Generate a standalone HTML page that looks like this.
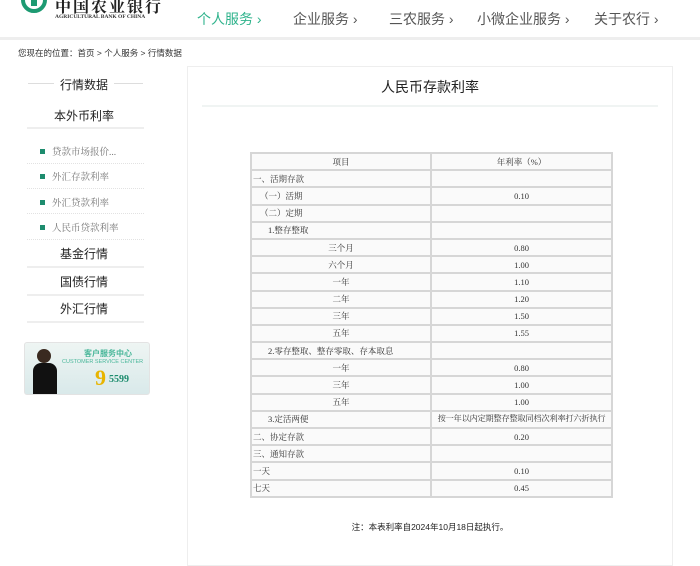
<!DOCTYPE html>
<html><head><meta charset="utf-8"><style>
*{margin:0;padding:0;box-sizing:border-box}
body{width:700px;height:552px;overflow:hidden;background:#fff;font-family:"Liberation Sans","Noto Sans CJK SC",sans-serif;position:relative;color:#333}
.a{position:absolute;white-space:nowrap}
.nav{font-size:14px;color:#555;top:9px}
.side{width:118px;left:25px;text-align:center;font-size:12px;color:#222}
.sub{left:40px;font-size:9.5px;color:#777;font-family:"Liberation Serif","Noto Serif CJK SC",serif}
.sub:before{content:"";display:inline-block;width:5px;height:5px;background:#1d8c6e;margin-right:7px;vertical-align:1px}
.dl{position:absolute;left:27px;width:117px;border-top:1px dotted #e2e2e2}
.sl{position:absolute;left:27px;width:117px;height:2px;background:#eee}
table{position:absolute;left:250px;top:152px;width:361px;border-collapse:collapse;table-layout:fixed;font-family:"Liberation Serif","Noto Serif CJK SC",serif;font-size:8.5px;color:#333}
td{border:2px solid #d6d6d6;height:17.2px;padding:0 1px;background:#fafafa;line-height:12px;white-space:nowrap;overflow:hidden}
td.c{text-align:center}
</style></head><body>
<div class="a" style="left:0;top:37px;width:700px;height:3px;background:#eee"></div>
<svg class="a" style="left:20px;top:-8px" width="28" height="22"><circle cx="14" cy="8" r="11" fill="none" stroke="#1d9a72" stroke-width="4"/><rect x="11" y="-2" width="6" height="16" fill="#1d9a72"/></svg>
<div class="a" style="left:55px;top:-6px;font-size:16px;font-weight:bold;color:#222;font-family:'Liberation Serif','Noto Serif CJK SC',serif;letter-spacing:2px">中国农业银行</div>
<div class="a" style="left:55px;top:14px;font-size:5.5px;font-weight:bold;color:#333;font-family:'Liberation Serif',serif">AGRICULTURAL BANK OF CHINA</div>
<div class="a nav" style="left:197px;color:#2fb38c">个人服务 ›</div>
<div class="a nav" style="left:293px">企业服务 ›</div>
<div class="a nav" style="left:389px">三农服务 ›</div>
<div class="a nav" style="left:477px">小微企业服务 ›</div>
<div class="a nav" style="left:594px">关于农行 ›</div>
<div class="a" style="left:18px;top:47px;font-size:8.5px;color:#333">您现在的位置：首页 &gt; 个人服务 &gt; 行情数据</div>

<div class="a" style="left:28px;top:83px;width:115px;height:1px;background:#ddd"></div>
<div class="a side" style="top:76px;"><span style="background:#fff;padding:0 6px">行情数据</span></div>
<div class="a side" style="top:107px">本外币利率</div>
<div class="sl" style="top:127px"></div>
<div class="a sub" style="top:144px">贷款市场报价...</div>
<div class="dl" style="top:163px"></div>
<div class="a sub" style="top:169px">外汇存款利率</div>
<div class="dl" style="top:188px"></div>
<div class="a sub" style="top:195px">外汇贷款利率</div>
<div class="dl" style="top:213px"></div>
<div class="a sub" style="top:220px">人民币贷款利率</div>
<div class="dl" style="top:239px"></div>
<div class="a side" style="top:245px">基金行情</div>
<div class="sl" style="top:266px"></div>
<div class="a side" style="top:273px">国债行情</div>
<div class="sl" style="top:294px"></div>
<div class="a side" style="top:300px">外汇行情</div>
<div class="sl" style="top:321px"></div>
<div class="a" style="left:24px;top:342px;width:126px;height:53px;border-radius:3px;background:linear-gradient(#eef5f3,#d9e9ea);border:1px solid #e3e3e3;overflow:hidden">
<div class="a" style="left:12px;top:6px;width:14px;height:14px;border-radius:50%;background:#3a2a20"></div>
<div class="a" style="left:8px;top:20px;width:24px;height:33px;background:#111;border-radius:8px 8px 0 0"></div>
<div class="a" style="left:59px;top:5px;font-size:8px;color:#4ab79a;font-weight:bold">客户服务中心</div>
<div class="a" style="left:37px;top:16px;font-size:5.5px;color:#4ab79a">CUSTOMER SERVICE CENTER</div>
<div class="a" style="left:70px;top:22px;font-size:22px;color:#e8b400;font-weight:bold;font-family:'Liberation Serif',serif">9</div>
<div class="a" style="left:84px;top:31px;font-size:10px;color:#1d8c6e;font-weight:bold;font-family:'Liberation Serif',serif">5599</div>
</div>

<div class="a" style="left:187px;top:66px;width:486px;height:500px;border:1px solid #eee"></div>
<div class="a" style="left:188px;top:77px;width:484px;text-align:center;font-size:14px;color:#222">人民币存款利率</div>
<div class="a" style="left:202px;top:105px;width:456px;height:2px;background:#f0f4f3"></div>

<table>
<colgroup><col style="width:180px"><col style="width:181px"></colgroup>
<tr><td class="c">项目</td><td class="c">年利率（%）</td></tr>
<tr><td>一、活期存款</td><td></td></tr>
<tr><td style="padding-left:8px">（一）活期</td><td class="c">0.10</td></tr>
<tr><td style="padding-left:8px">（二）定期</td><td></td></tr>
<tr><td style="padding-left:16px">1.整存整取</td><td></td></tr>
<tr><td class="c">三个月</td><td class="c">0.80</td></tr>
<tr><td class="c">六个月</td><td class="c">1.00</td></tr>
<tr><td class="c">一年</td><td class="c">1.10</td></tr>
<tr><td class="c">二年</td><td class="c">1.20</td></tr>
<tr><td class="c">三年</td><td class="c">1.50</td></tr>
<tr><td class="c">五年</td><td class="c">1.55</td></tr>
<tr><td style="padding-left:16px">2.零存整取、整存零取、存本取息</td><td></td></tr>
<tr><td class="c">一年</td><td class="c">0.80</td></tr>
<tr><td class="c">三年</td><td class="c">1.00</td></tr>
<tr><td class="c">五年</td><td class="c">1.00</td></tr>
<tr><td style="padding-left:16px">3.定活两便</td><td class="c" style="font-size:8.2px;letter-spacing:-0.2px">按一年以内定期整存整取同档次利率打六折执行</td></tr>
<tr><td>二、协定存款</td><td class="c">0.20</td></tr>
<tr><td>三、通知存款</td><td></td></tr>
<tr><td>一天</td><td class="c">0.10</td></tr>
<tr><td>七天</td><td class="c">0.45</td></tr>
</table>
<div class="a" style="left:188px;top:521px;width:484px;text-align:center;font-size:8.5px;color:#222">注：本表利率自2024年10月18日起执行。</div>
</body></html>
